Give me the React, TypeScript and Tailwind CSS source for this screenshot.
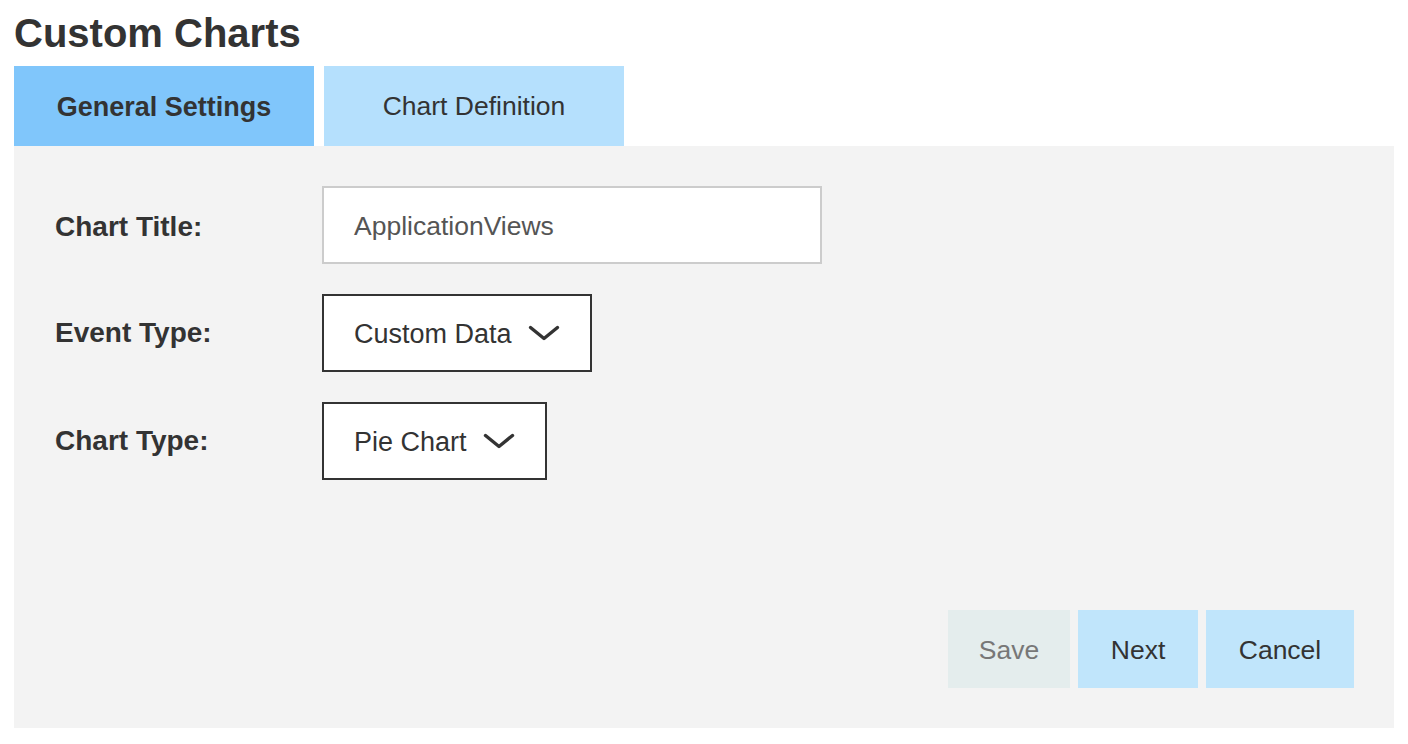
import React from "react";

function Chevron() {
  return (
    <svg width="32" height="18" viewBox="0 0 32 18" fill="none" className="shrink-0">
      <path d="M2.5 3.5 L16 14.5 L29.5 3.5" stroke="#333333" strokeWidth="3.4" strokeLinecap="round" strokeLinejoin="round" />
    </svg>
  );
}

function Select({ value }: { value: string }) {
  return (
    <div className="flex h-[78px] items-center gap-[16px] border-2 border-[#333333] bg-white pl-[30px] pr-[30px] text-[27px] text-[#333333]">
      <span className="pt-[3px]">{value}</span>
      <Chevron />
    </div>
  );
}

export default function App() {
  return (
    <div className="min-h-[744px] bg-white px-[14px] pb-[16px] font-['Liberation_Sans',Arial,Helvetica,sans-serif] text-[#333333]">
      <h1 className="h-[66px] pt-[10px] text-[40px] font-bold leading-[46px] text-[#333333]">Custom Charts</h1>
      <div className="flex gap-[10px]">
        <div className="flex h-[80px] w-[300px] items-center justify-center bg-[#80c6fb] pt-[2px] text-[27px] font-bold">
          General Settings
        </div>
        <div className="flex h-[80px] w-[300px] items-center justify-center bg-[#b5e0fd] pt-[2px] text-[26.5px]">
          Chart Definition
        </div>
      </div>
      <div className="flex h-[582px] flex-col bg-[#f3f3f3] pb-[40px] pl-[41px] pr-[40px] pt-[40px]">
        <div className="flex flex-col gap-[30px]">
          <div className="flex items-center">
            <div className="w-[267px] pt-[3px] text-[28px] font-bold">Chart Title:</div>
            <div className="flex h-[78px] w-[500px] items-center border-2 border-[#cccccc] bg-white pl-[30px] pt-[3px] text-[26.5px] text-[#555555]">
              ApplicationViews
            </div>
          </div>
          <div className="flex items-center">
            <div className="w-[267px] text-[28px] font-bold">Event Type:</div>
            <Select value="Custom Data" />
          </div>
          <div className="flex items-center">
            <div className="w-[267px] text-[28px] font-bold">Chart Type:</div>
            <Select value="Pie Chart" />
          </div>
        </div>
        <div className="mt-auto flex justify-end gap-[8px]">
          <button className="flex h-[78px] w-[122px] items-center justify-center bg-[#e4eded] pt-[3px] text-[26.5px] text-[#777777]">
            Save
          </button>
          <button className="flex h-[78px] w-[120px] items-center justify-center bg-[#c0e5fb] pt-[3px] text-[26.5px] text-[#333333]">
            Next
          </button>
          <button className="flex h-[78px] w-[148px] items-center justify-center bg-[#c0e5fb] pt-[3px] text-[26.5px] text-[#333333]">
            Cancel
          </button>
        </div>
      </div>
    </div>
  );
}
